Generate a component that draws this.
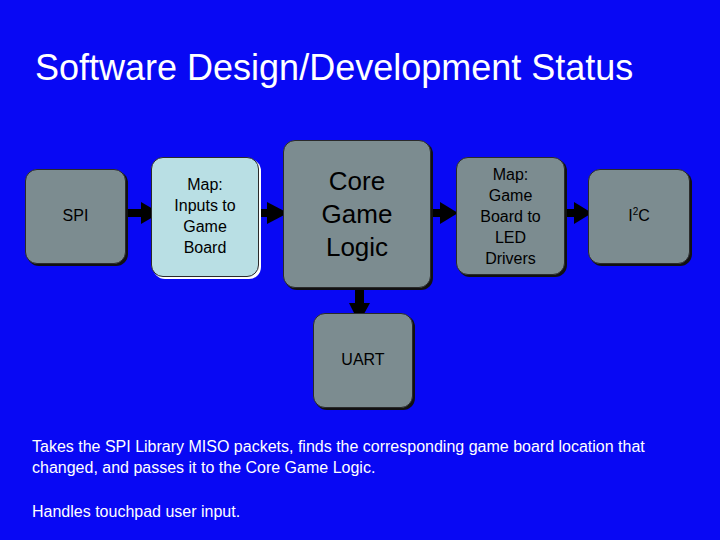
export default function App() {
  const box =
    "absolute flex items-center justify-center text-center rounded-[12px] border border-[#2a2a2a] shadow-[2px_2px_0_#111] text-black leading-[1.3]";
  return (
    <div className="w-[720px] h-[540px] bg-[#0808f4] text-white font-[Liberation_Sans] overflow-hidden">
      <h1 className="pt-[46px] pl-[35px] text-[36px] leading-[44px]">Software Design/Development Status</h1>
      <div className="relative h-[290px] mt-[40px]">
        {/* arrows */}
        <svg className="absolute left-0 top-0" width="720" height="290">
          <g fill="#000">
            <rect x="127" y="79" width="16" height="8" />
            <polygon points="141,72 160,83 141,94" />
            <rect x="260" y="79" width="10" height="8" />
            <polygon points="267,72 288,83 267,94" />
            <rect x="432" y="79" width="10" height="8" />
            <polygon points="440,72 458,83 440,94" />
            <rect x="566" y="79" width="10" height="8" />
            <polygon points="574,72 592,83 574,94" />
            <rect x="355" y="159" width="9" height="16" />
            <polygon points="349,173 370,173 359,193" />
          </g>
        </svg>
        <div className={box + " left-[25px] top-[39px] w-[101px] h-[95px] bg-[#7c8c90] text-[16px]"}>SPI</div>
        <div className={box + " left-[151px] top-[27px] w-[108px] h-[120px] bg-[#b9dfe4] text-[16px] shadow-[2px_2px_0_#fff]"}>
          Map:<br />Inputs to<br />Game<br />Board
        </div>
        <div className={box + " left-[283px] top-[10px] w-[148px] h-[148px] bg-[#7c8c90] text-[26px] leading-[33px]"}>
          Core<br />Game<br />Logic
        </div>
        <div className={box + " left-[456px] top-[27px] w-[109px] h-[118px] bg-[#7c8c90] text-[16px] leading-[21px]"}>
          Map:<br />Game<br />Board to<br />LED<br />Drivers
        </div>
        <div className={box + " left-[588px] top-[39px] w-[102px] h-[95px] bg-[#7c8c90] text-[16px]"}>
          I<sup className="text-[10px]">2</sup>C
        </div>
        <div className={box + " left-[313px] top-[183px] w-[100px] h-[95px] bg-[#7c8c90] text-[16px]"}>UART</div>
      </div>
      <div className="pl-[32px] pr-[20px] text-[16px] leading-[21px] mt-[16px]">
        <p>Takes the SPI Library MISO packets, finds the corresponding game board location that changed, and passes it to the Core Game Logic.</p>
        <p className="mt-[23px]">Handles touchpad user input.</p>
      </div>
    </div>
  );
}
